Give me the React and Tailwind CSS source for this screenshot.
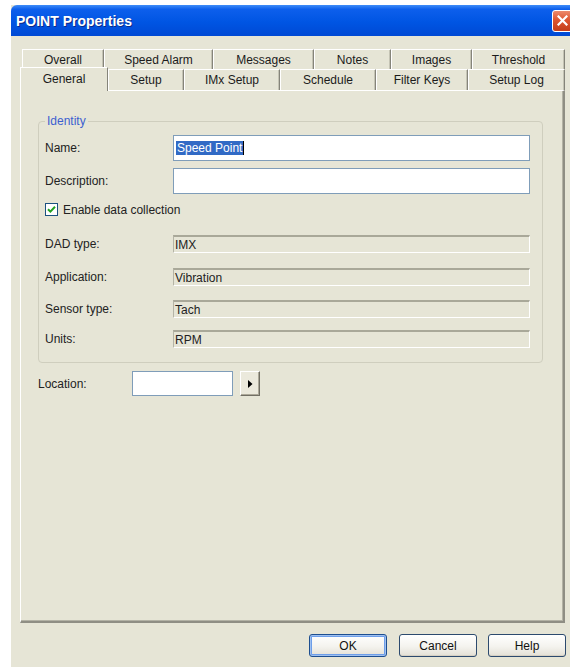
import React from "react";

const font = "font-['Liberation_Sans',Arial,sans-serif]";

const row1 = [
  ["Overall", 82],
  ["Speed Alarm", 109],
  ["Messages", 101],
  ["Notes", 77],
  ["Images", 81],
  ["Threshold", 93],
];

const row2 = [
  ["Setup", 76],
  ["IMx Setup", 96],
  ["Schedule", 96],
  ["Filter Keys", 92],
  ["Setup Log", 97],
];

function Tab({ label, width, height }) {
  return (
    <div
      className="flex items-center justify-center border-t border-l border-t-white border-l-white border-r border-r-[#85847a] shadow-[inset_-1px_0_0_#c4c3b4] bg-[#e6e5d6] text-[12px] text-[#1b1b1b] leading-none"
      style={{ width, height }}
    >
      {label}
    </div>
  );
}

function ReadOnly({ label, value, className = "" }) {
  return (
    <div className={`flex items-center ${className}`}>
      <div className="w-[128px] text-[12px] text-[#222]">{label}</div>
      <div className="w-[357px] h-[18px] flex items-center pl-px border-t-2 border-l border-t-[#a9a899] border-l-[#b5b4a6] border-b border-r border-b-white border-r-white text-[12px] text-[#222] leading-none">
        {value}
      </div>
    </div>
  );
}

function Button({ children, primary }) {
  return (
    <div
      className={`w-[78px] h-[23px] flex items-center justify-center rounded-[3px] border text-[12px] text-[#111] bg-[linear-gradient(180deg,#ffffff_0%,#f4f3ee_55%,#e3e0d6_100%)] ${
        primary
          ? "border-[#1d4e8f] shadow-[inset_0_0_0_1px_#9fc0f0,inset_0_0_0_2px_#6d9ee9]"
          : "border-[#2c4a6e] shadow-[inset_0_-1px_0_#d6d0c3]"
      }`}
    >
      {children}
    </div>
  );
}

export default function App() {
  return (
    <div className={`w-[570px] h-[667px] bg-white overflow-hidden ${font}`}>
      <div className="ml-[11px] mt-[5px] w-[564px] h-[662px] flex flex-col bg-[#e6e5d6]">
        {/* title bar */}
        <div className="h-[31px] flex items-center justify-between pl-[5px] rounded-tl-[6px] bg-[linear-gradient(180deg,#3f8cf8_0%,#0d5fec_14%,#0055e3_55%,#0049d4_100%)]">
          <span className="text-white font-bold text-[14px] leading-none [text-shadow:1px_1px_0_#0a2a8a]">
            POINT Properties
          </span>
          <div className="mr-[2px] w-[21px] h-[22px] rounded-[3px] border border-white bg-[linear-gradient(180deg,#ec8a6c_0%,#dd5530_45%,#c33d1a_100%)] flex items-center justify-center">
            <svg width="11" height="11" viewBox="0 0 11 11">
              <path d="M1.5 1.5 L9.5 9.5 M9.5 1.5 L1.5 9.5" stroke="white" strokeWidth="2.2" strokeLinecap="square" />
            </svg>
          </div>
        </div>

        {/* tab rows */}
        <div className="mt-[13px] ml-[11px] flex">
          {row1.map(([l, w]) => (
            <Tab key={l} label={l} width={w} height={20} />
          ))}
        </div>
        <div className="ml-[11px] flex items-end h-[21px]">
          <div className="relative z-10 -ml-[2px] -mb-px w-[88px] h-[24px] flex items-center justify-center pb-[1px] border-t border-l border-t-white border-l-white border-r border-r-[#85847a] bg-[#e6e5d6] text-[12px] text-[#1b1b1b] leading-none">
            General
          </div>
          {row2.map(([l, w]) => (
            <Tab key={l} label={l} width={w} height={21} />
          ))}
        </div>

        {/* tab page */}
        <div className="ml-[9px] w-[545px] h-[533px] border-t border-l border-t-white border-l-white border-r-2 border-b-2 border-r-[#8f8e84] border-b-[#8f8e84] shadow-[inset_-1px_-1px_0_#b3b2a5] flex flex-col">
          <div className="relative ml-[17px] mt-[30px] w-[505px] rounded-[4px] border border-[#cfcebe] pl-[6px] pt-[13px] pb-[14px]">
            <span className="absolute -top-[8px] left-[6px] px-[2px] bg-[#e6e5d6] text-[12px] leading-[14px] text-[#3d5fd0]">
              Identity
            </span>

            <div className="flex items-center">
              <div className="w-[128px] text-[12px] text-[#222]">Name:</div>
              <div className="w-[357px] h-[26px] flex items-center pl-[2px] bg-white border border-[#7f9db9]">
                <span className="bg-[#316ac5] text-white text-[12px] leading-[14px] px-px">Speed Point</span>
                <span className="w-px h-[14px] bg-black" />
              </div>
            </div>

            <div className="flex items-center mt-[7px]">
              <div className="w-[128px] text-[12px] text-[#222]">Description:</div>
              <div className="w-[357px] h-[26px] bg-white border border-[#7f9db9]" />
            </div>

            <div className="flex items-center mt-[8px] h-[15px]">
              <div className="w-[13px] h-[13px] bg-white border border-[#1c5180] flex items-center justify-center">
                <svg width="9" height="9" viewBox="0 0 9 9">
                  <path d="M1 4.2 L3.4 6.6 L8 1.8" fill="none" stroke="#21a121" strokeWidth="2" />
                </svg>
              </div>
              <span className="ml-[5px] text-[12px] text-[#222] leading-none">Enable data collection</span>
            </div>

            <ReadOnly label="DAD type:" value="IMX" className="mt-[18px]" />
            <ReadOnly label="Application:" value="Vibration" className="mt-[15px]" />
            <ReadOnly label="Sensor type:" value="Tach" className="mt-[14px]" />
            <ReadOnly label="Units:" value="RPM" className="mt-[12px]" />
          </div>

          <div className="ml-[17px] mt-[8px] flex items-center">
            <div className="w-[94px] text-[12px] text-[#222]">Location:</div>
            <div className="w-[101px] h-[25px] bg-white border border-[#7f9db9]" />
            <div className="ml-[7px] w-[20px] h-[25px] flex items-center justify-center bg-[#ebe9dc] border border-t-white border-l-white border-r-[#716f64] border-b-[#716f64] shadow-[inset_-1px_-1px_0_#aca899]">
              <svg width="5" height="8" viewBox="0 0 5 8">
                <path d="M0 0 L4.5 4 L0 8 Z" fill="#000" />
              </svg>
            </div>
          </div>
        </div>

        {/* dialog buttons */}
        <div className="mt-[11px] ml-[298px] flex">
          <Button primary>OK</Button>
          <div className="ml-[12px]">
            <Button>Cancel</Button>
          </div>
          <div className="ml-[11px] w-[79px]">
            <Button>Help</Button>
          </div>
        </div>
      </div>
    </div>
  );
}
